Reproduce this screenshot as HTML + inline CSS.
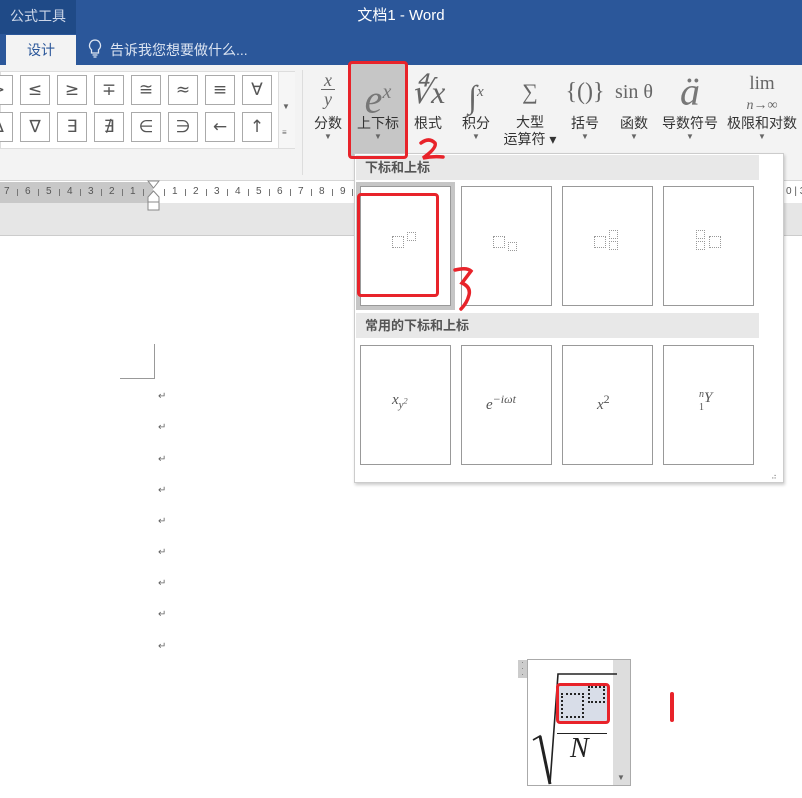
<!DOCTYPE html>
<html><head><meta charset="utf-8"><style>
*{margin:0;padding:0;box-sizing:border-box}
body{width:802px;height:798px;position:relative;overflow:hidden;background:#fff;font-family:"Liberation Sans","Noto Sans CJK SC",sans-serif;color:#444}
.a{position:absolute}
.cell{position:absolute;width:30px;height:30px;border:1px solid #aaa;background:#fff;font-size:17px;text-align:center;line-height:28px;color:#555;font-family:"DejaVu Sans",sans-serif}
.btn{position:absolute;top:70px;text-align:center;font-size:14px;color:#333}
.ic{font-family:"Liberation Serif",serif;font-style:italic;color:#666;height:44px}
.lb{line-height:18px}
.tri{font-size:8px;color:#666}
.dc{position:absolute;width:91px;height:120px;border:1px solid #999;background:#fff}
.hd{position:absolute;left:356px;width:403px;height:25px;background:#e8e8e8;font-size:13px;font-weight:bold;color:#555;padding-left:9px;line-height:25px}
.red{position:absolute;border:3px solid #e8232a;border-radius:4px}
.pm{position:absolute;left:158px;font-size:10px;color:#666}
.dot{position:absolute;border:1px dotted #999}
.mth{position:absolute;font-family:"Liberation Serif",serif;font-style:italic;color:#555;font-size:14px}
.rn{position:absolute;top:186px;font-size:10px;color:#555;white-space:nowrap}
.tk{position:absolute;top:189px;width:1px;height:7px;background:#777}
</style></head><body>
<div class="a" style="left:0;top:0;width:802px;height:65px;background:#2b579a"></div>
<div class="a" style="left:0;top:0;width:76px;height:34px;background:#1f4a87;color:#ccd6e8;font-size:14px;line-height:32px;padding-left:10px">公式工具</div>
<div class="a" style="left:0;top:4px;width:802px;text-align:center;color:#fff;font-size:15px">文档1 - Word</div>
<div class="a" style="left:6px;top:35px;width:70px;height:30px;background:#f3f3f3;color:#2b579a;font-size:14px;text-align:center;line-height:30px">设计</div>
<svg class="a" style="left:88px;top:39px" width="14" height="20"><path d="M7 1a5.5 5.5 0 0 0-3.5 9.7V14h7v-3.3A5.5 5.5 0 0 0 7 1zM4.5 16h5M5.5 18h3" fill="none" stroke="#dde5f2" stroke-width="1.3"/></svg>
<div class="a" style="left:110px;top:40px;color:#dde5f2;font-size:14px">告诉我您想要做什么...</div>
<!-- ribbon -->
<div class="a" style="left:0;top:65px;width:802px;height:116px;background:#f3f3f3;border-bottom:1px solid #d6d6d6"></div>
<div class="a" style="left:0;top:71px;width:295px;height:78px;background:#fff;border:1px solid #ddd"></div>
<div class="cell" style="left:-17px;top:75px">&gt;</div><div class="cell" style="left:20px;top:75px">≤</div><div class="cell" style="left:57px;top:75px">≥</div><div class="cell" style="left:94px;top:75px">∓</div><div class="cell" style="left:131px;top:75px">≅</div><div class="cell" style="left:168px;top:75px">≈</div><div class="cell" style="left:205px;top:75px">≡</div><div class="cell" style="left:242px;top:75px">∀</div>
<div class="cell" style="left:-17px;top:112px">∆</div><div class="cell" style="left:20px;top:112px">∇</div><div class="cell" style="left:57px;top:112px">∃</div><div class="cell" style="left:94px;top:112px">∄</div><div class="cell" style="left:131px;top:112px">∈</div><div class="cell" style="left:168px;top:112px">∋</div><div class="cell" style="left:205px;top:112px">←</div><div class="cell" style="left:242px;top:112px">↑</div>
<div class="a" style="left:278px;top:72px;width:17px;height:76px;background:#f6f6f6;border-left:1px solid #ddd"></div>
<div class="a tri" style="left:282px;top:102px">▼</div><div class="a tri" style="left:282px;top:128px">≡</div>
<div class="a" style="left:302px;top:70px;width:1px;height:105px;background:#ddd"></div>
<div class="btn" style="left:313px;width:30px"><div class="ic" style="font-size:18px;line-height:18px;padding-top:1px">x<div style="border-top:1px solid #666;width:14px;margin:0 auto"></div>y</div><div class="lb">分数</div><div class="tri">▼</div></div>
<div class="a" style="left:349px;top:63px;width:58px;height:94px;background:#c6c6c6"></div>
<div class="btn" style="left:349px;width:58px"><div class="ic" style="font-size:40px;line-height:44px;color:#777">e<sup style="font-size:20px">x</sup></div><div class="lb">上下标</div><div class="tri">▼</div></div>
<div class="btn" style="left:404px;width:48px"><div class="ic" style="font-size:32px;line-height:44px;color:#666">∜x</div><div class="lb">根式</div></div>
<div class="btn" style="left:456px;width:40px"><div class="ic" style="font-size:32px;line-height:44px;color:#666">∫<sup style="font-size:15px">x</sup></div><div class="lb">积分</div><div class="tri">▼</div></div>
<div class="btn" style="left:500px;width:60px"><div class="ic" style="font-size:22px;line-height:44px;color:#666">∑</div><div style="line-height:17px">大型<br>运算符 ▾</div></div>
<div class="btn" style="left:563px;width:44px"><div style="font-size:24px;line-height:44px;height:44px;color:#666;font-family:'Liberation Serif',serif">{()}</div><div class="lb">括号</div><div class="tri">▼</div></div>
<div class="btn" style="left:612px;width:44px"><div style="font-size:20px;line-height:44px;height:44px;color:#666;font-family:'Liberation Serif',serif">sin θ</div><div class="lb">函数</div><div class="tri">▼</div></div>
<div class="btn" style="left:658px;width:64px"><div class="ic" style="font-size:40px;line-height:44px;color:#777">ä</div><div class="lb">导数符号</div><div class="tri">▼</div></div>
<div class="btn" style="left:722px;width:80px"><div style="font-size:19px;line-height:20px;height:44px;padding-top:4px;color:#666;font-family:'Liberation Serif',serif">lim<br><i style="font-size:14px">n→∞</i></div><div class="lb">极限和对数</div><div class="tri">▼</div></div>
<!-- ruler -->
<div class="a" style="left:0;top:182px;width:802px;height:54px;background:#e6e6e6;border-bottom:1px solid #ccc"></div>
<div class="a" style="left:0;top:182px;width:153px;height:21px;background:#c8c8c8"></div>
<div class="a" style="left:153px;top:182px;width:649px;height:21px;background:#fff"></div>
<div class="rn" style="left:4px">7</div><div class="tk" style="left:17px"></div><div class="rn" style="left:25px">6</div><div class="tk" style="left:38px"></div><div class="rn" style="left:46px">5</div><div class="tk" style="left:59px"></div><div class="rn" style="left:67px">4</div><div class="tk" style="left:80px"></div><div class="rn" style="left:88px">3</div><div class="tk" style="left:101px"></div><div class="rn" style="left:109px">2</div><div class="tk" style="left:122px"></div><div class="rn" style="left:130px">1</div><div class="tk" style="left:143px"></div>
<div class="tk" style="left:164px"></div><div class="rn" style="left:172px">1</div><div class="tk" style="left:185px"></div><div class="rn" style="left:193px">2</div><div class="tk" style="left:206px"></div><div class="rn" style="left:214px">3</div><div class="tk" style="left:227px"></div><div class="rn" style="left:235px">4</div><div class="tk" style="left:248px"></div><div class="rn" style="left:256px">5</div><div class="tk" style="left:269px"></div><div class="rn" style="left:277px">6</div><div class="tk" style="left:290px"></div><div class="rn" style="left:298px">7</div><div class="tk" style="left:311px"></div><div class="rn" style="left:319px">8</div><div class="tk" style="left:332px"></div><div class="rn" style="left:340px">9</div><div class="tk" style="left:352px"></div>
<div class="rn" style="left:786px">0 | 3</div>
<svg class="a" style="left:147px;top:180px" width="13" height="32"><path d="M1 1h11l-5.5 7zM6.5 11l5.5 6v5h-11v-5z" fill="#fff" stroke="#888"/><rect x="1" y="22" width="11" height="8" fill="#fff" stroke="#888"/></svg>
<div class="a" style="left:0;top:236px;width:802px;height:562px;background:#fff"></div>
<!-- document -->
<div class="a" style="left:120px;top:344px;width:35px;height:35px;border-right:1px solid #999;border-bottom:1px solid #999"></div>
<div class="pm" style="top:391px">↵</div><div class="pm" style="top:422px">↵</div><div class="pm" style="top:454px">↵</div><div class="pm" style="top:485px">↵</div><div class="pm" style="top:516px">↵</div><div class="pm" style="top:547px">↵</div><div class="pm" style="top:578px">↵</div><div class="pm" style="top:609px">↵</div><div class="pm" style="top:641px">↵</div>
<!-- dropdown -->
<div class="a" style="left:354px;top:153px;width:430px;height:330px;background:#fff;border:1px solid #ccc;box-shadow:1px 2px 3px rgba(0,0,0,.2)"></div>
<div class="hd" style="top:155px">下标和上标</div>
<div class="a" style="left:356px;top:182px;width:99px;height:128px;background:#c6c6c6"></div>
<div class="dc" style="left:360px;top:186px"></div><div class="dc" style="left:461px;top:186px"></div><div class="dc" style="left:562px;top:186px"></div><div class="dc" style="left:663px;top:186px"></div>
<div class="dot" style="left:392px;top:236px;width:12px;height:12px"></div><div class="dot" style="left:407px;top:232px;width:9px;height:9px"></div>
<div class="dot" style="left:493px;top:236px;width:12px;height:12px"></div><div class="dot" style="left:508px;top:242px;width:9px;height:9px"></div>
<div class="dot" style="left:594px;top:236px;width:12px;height:12px"></div><div class="dot" style="left:609px;top:230px;width:9px;height:9px"></div><div class="dot" style="left:609px;top:241px;width:9px;height:9px"></div>
<div class="dot" style="left:709px;top:236px;width:12px;height:12px"></div><div class="dot" style="left:696px;top:230px;width:9px;height:9px"></div><div class="dot" style="left:696px;top:241px;width:9px;height:9px"></div>
<div class="hd" style="top:313px">常用的下标和上标</div>
<div class="dc" style="left:360px;top:345px"></div><div class="dc" style="left:461px;top:345px"></div><div class="dc" style="left:562px;top:345px"></div><div class="dc" style="left:663px;top:345px"></div>
<div class="mth" style="left:392px;top:392px;font-size:15px">x<sub style="font-size:11px">y<sup style="font-size:8px">2</sup></sub></div>
<div class="mth" style="left:486px;top:392px;font-size:15px">e<sup style="font-size:12px">−iωt</sup></div>
<div class="mth" style="left:597px;top:392px;font-size:15px">x<sup style="font-size:12px;font-style:normal">2</sup></div>
<div class="mth" style="left:699px;top:390px;font-size:15px"><span style="font-size:10px;position:relative;top:-5px">n</span>Y<span style="font-size:10px;position:absolute;left:0;top:12px;font-style:normal">1</span></div>
<div class="a" style="left:771px;top:472px;font-size:8px;color:#888">⠴</div>
<!-- equation -->
<div class="a" style="left:527px;top:659px;width:104px;height:127px;border:1px solid #aaa;background:#fff"></div>
<div class="a" style="left:613px;top:660px;width:17px;height:125px;background:#ddd"></div>
<div class="a tri" style="left:617px;top:773px">▼</div>
<div class="a" style="left:518px;top:660px;width:9px;height:18px;background:#ccc;font-size:8px;color:#666;line-height:6px;text-align:center">·<br>·<br>·</div>
<svg class="a" style="left:527px;top:660px" width="90" height="125"><path d="M6 80l7-4 10 48 8-110h77" fill="none" stroke="#222" stroke-width="1.6"/><path d="M13 76l10 48" stroke="#222" stroke-width="3"/></svg>
<div class="a" style="left:557px;top:686px;width:50px;height:36px;background:#d8dde8"></div>
<div class="a" style="left:561px;top:693px;width:23px;height:25px;border:2px dotted #222"></div>
<div class="a" style="left:588px;top:686px;width:17px;height:17px;border:2px dotted #222"></div>
<div class="a" style="left:557px;top:733px;width:50px;height:1px;background:#222"></div>
<div class="a" style="left:570px;top:733px;font-family:'Liberation Serif',serif;font-style:italic;font-size:28px;color:#222">N</div>
<!-- red annotations -->
<div class="red" style="left:348px;top:61px;width:60px;height:98px"></div>
<div class="red" style="left:357px;top:193px;width:82px;height:104px"></div>
<div class="red" style="left:556px;top:683px;width:54px;height:41px"></div>
<svg class="a" style="left:418px;top:138px" width="30" height="24"><path d="M3 5q8-6 14 0q2 5-12 15q10-2 20-1" fill="none" stroke="#e8232a" stroke-width="3.5" stroke-linecap="round"/></svg>
<svg class="a" style="left:452px;top:266px" width="24" height="46"><path d="M3 4q12-3 16 1l-9 12q9 4 7 12q-2 8-8 14" fill="none" stroke="#e8232a" stroke-width="3.5" stroke-linecap="round"/></svg>
<div class="a" style="left:670px;top:692px;width:4px;height:30px;background:#e8232a;border-radius:2px"></div>
</body></html>
